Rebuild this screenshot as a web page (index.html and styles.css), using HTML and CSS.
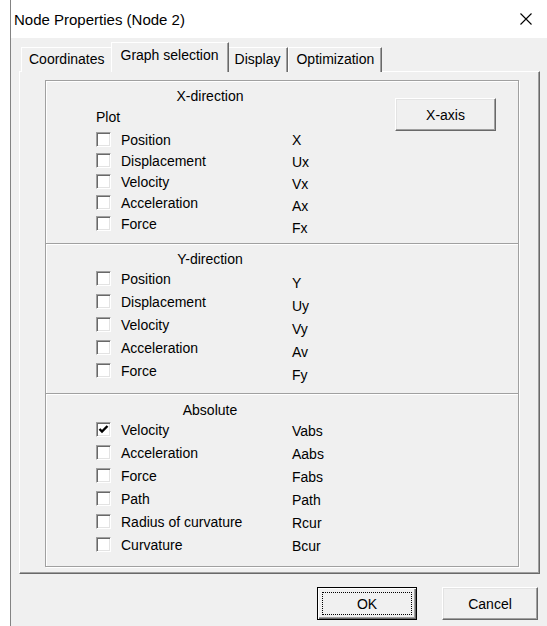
FILE: index.html
```html
<!DOCTYPE html>
<html>
<head>
    <meta charset="utf-8">
    <title>Node Properties (Node 2)</title>
    <link rel="stylesheet" href="styles.css">
</head>
<body>
    <div class="window">
        <div class="titlebar">
            <span class="title">Node Properties (Node 2)</span>
            <svg class="close" width="12" height="12" viewBox="0 0 12 12"><path d="M0.5 0.5 L11.5 11.5 M11.5 0.5 L0.5 11.5" stroke="#000" stroke-width="1.1" fill="none"/></svg>
        </div>
        <div class="client">
            <div class="tabs">
                <div class="tab">Coordinates</div>
                <div class="tab active">Graph selection</div>
                <div class="tab">Display</div>
                <div class="tab">Optimization</div>
            </div>
            <div class="panel">
                <div class="group">
                    <!-- X-direction -->
                    <div class="section sec-x">
                        <div class="sec-left">
                            <div class="sec-title">X-direction</div>
                            <div class="sec-body">
                                <div class="checks">
                                    <div class="plot">Plot</div>
                                    <div class="rows rows-x">
                                        <div class="row"><span class="chk"></span>Position</div>
                                        <div class="row"><span class="chk"></span>Displacement</div>
                                        <div class="row"><span class="chk"></span>Velocity</div>
                                        <div class="row"><span class="chk"></span>Acceleration</div>
                                        <div class="row"><span class="chk"></span>Force</div>
                                    </div>
                                </div>
                                <div class="syms syms-x">
                                    <div>X</div>
                                    <div>Ux</div>
                                    <div>Vx</div>
                                    <div>Ax</div>
                                    <div>Fx</div>
                                </div>
                            </div>
                        </div>
                        <button class="btn btn-axis">X-axis</button>
                    </div>
                    <!-- Y-direction -->
                    <div class="section sec-y">
                        <div class="sec-left">
                            <div class="sec-title">Y-direction</div>
                            <div class="sec-body">
                                <div class="checks">
                                    <div class="rows">
                                        <div class="row"><span class="chk"></span>Position</div>
                                        <div class="row"><span class="chk"></span>Displacement</div>
                                        <div class="row"><span class="chk"></span>Velocity</div>
                                        <div class="row"><span class="chk"></span>Acceleration</div>
                                        <div class="row"><span class="chk"></span>Force</div>
                                    </div>
                                </div>
                                <div class="syms syms-y">
                                    <div>Y</div>
                                    <div>Uy</div>
                                    <div>Vy</div>
                                    <div>Av</div>
                                    <div>Fy</div>
                                </div>
                            </div>
                        </div>
                    </div>
                    <!-- Absolute -->
                    <div class="section sec-abs">
                        <div class="sec-left">
                            <div class="sec-title">Absolute</div>
                            <div class="sec-body">
                                <div class="checks">
                                    <div class="rows">
                                        <div class="row"><span class="chk"><svg width="13" height="13" viewBox="0 0 13 13"><path d="M2.5 6 L5 8.5 L10.5 3" stroke="#000" stroke-width="2.4" fill="none"/></svg></span>Velocity</div>
                                        <div class="row"><span class="chk"></span>Acceleration</div>
                                        <div class="row"><span class="chk"></span>Force</div>
                                        <div class="row"><span class="chk"></span>Path</div>
                                        <div class="row"><span class="chk"></span>Radius of curvature</div>
                                        <div class="row"><span class="chk"></span>Curvature</div>
                                    </div>
                                </div>
                                <div class="syms syms-abs">
                                    <div>Vabs</div>
                                    <div>Aabs</div>
                                    <div>Fabs</div>
                                    <div>Path</div>
                                    <div>Rcur</div>
                                    <div>Bcur</div>
                                </div>
                            </div>
                        </div>
                    </div>
                </div>
            </div>
            <div class="buttons">
                <button class="btn btn-ok"><span class="focus">OK</span></button>
                <button class="btn btn-cancel">Cancel</button>
            </div>
        </div>
    </div>
</body>
</html>
```

FILE: styles.css
```css
body {
    margin: 0;
    background-color: #fff;
    font: 14px "Liberation Sans", Arial, sans-serif;
    color: #000;
}
.window {
    margin-left: 10px;
    border-left: 1px solid #838383;
    height: 626px;
    background-color: #f0f0f0;
}
.titlebar {
    height: 38px;
    background-color: #fff;
    display: flex;
    align-items: center;
    padding: 0 15px 0 3px;
}
.title {
    flex: 1;
    font-size: 15px;
}
.client {
    padding: 4px 7px 0 8px;
}

/* tabs */
.tabs {
    display: flex;
    align-items: flex-end;
    height: 30px;
    padding-left: 2px;
    margin-bottom: -1px;
}
.tab {
    box-sizing: border-box;
    height: 25px;
    line-height: 22px;
    padding: 0 7px;
    border-top: 1px solid #fff;
    border-left: 1px solid #fff;
    border-right: 1px solid #696969;
    box-shadow: inset -1px 0 0 #a0a0a0;
    background-color: #f0f0f0;
}
.tab.active {
    position: relative;
    z-index: 1;
    height: 30px;
    padding: 1px 9px 0 9px;
    margin: 0 -2px;
}
.panel {
    border-top: 1px solid #fff;
    border-left: 1px solid #fff;
    border-right: 1px solid #696969;
    border-bottom: 1px solid #696969;
    box-shadow: inset -1px -1px 0 #a0a0a0;
    padding: 8px 20px 6px 25px;
}

/* group box */
.group {
    border: 1px solid #a0a0a0;
    box-shadow: inset 1px 1px 0 #fff, 1px 1px 0 #fff;
}
.section {
    display: flex;
    box-sizing: border-box;
}
.sec-x {
    height: 163px;
    padding-top: 7px;
    border-bottom: 1px solid #a0a0a0;
    box-shadow: 0 1px 0 #fff;
}
.sec-y {
    height: 150px;
    padding-top: 7px;
    border-bottom: 1px solid #a0a0a0;
    box-shadow: 0 1px 0 #fff;
}
.sec-abs {
    height: 172px;
    padding-top: 8px;
}
.sec-left {
    width: 328px;
}
.sec-title {
    text-align: center;
    line-height: 16px;
}
.sec-body {
    display: flex;
}
.checks {
    width: 196px;
    margin-left: 50px;
}
.plot {
    margin-top: 5px;
    line-height: 16px;
}
.rows-x {
    margin-top: 4px;
}
.row {
    display: flex;
    align-items: center;
    height: 23px;
    white-space: nowrap;
}
.rows-x .row {
    height: 21px;
}
.chk {
    box-sizing: border-box;
    width: 15px;
    height: 15px;
    margin-right: 10px;
    border: 1px solid;
    border-color: #a0a0a0 #fff #fff #a0a0a0;
    box-shadow: inset 1px 1px 0 #696969, inset -1px -1px 0 #e3e3e3;
    background-color: #fff;
    flex: none;
}
.chk svg {
    display: block;
}
.syms div {
    line-height: 23px;
    height: 23px;
}
.syms-x {
    padding-top: 25px;
}
.syms-x div {
    line-height: 22px;
    height: 22px;
}
.syms-y {
    padding-top: 5px;
}
.syms-abs {
    padding-top: 2px;
}

/* buttons */
.btn {
    box-sizing: border-box;
    height: 33px;
    padding: 0;
    font: 14px "Liberation Sans", Arial, sans-serif;
    color: #000;
    background-color: #f0f0f0;
    border: 1px solid;
    border-color: #fff #696969 #696969 #fff;
    box-shadow: inset -1px -1px 0 #a0a0a0, inset 1px 1px 0 #e3e3e3;
}
.btn-axis {
    width: 101px;
    margin: 10px 0 0 21px;
}
.buttons {
    display: flex;
    justify-content: flex-end;
    gap: 25px;
    margin-top: 13px;
    padding-right: 2px;
}
.btn-ok {
    width: 100px;
    display: flex;
    border-color: #000;
    box-shadow: inset 1px 1px 0 #fff, inset -1px -1px 0 #696969, inset -2px -2px 0 #a0a0a0;
}
.btn-ok .focus {
    flex: 1;
    display: flex;
    align-items: center;
    justify-content: center;
    margin: 4px;
    border: 1px dotted #000;
}
.btn-cancel {
    width: 96px;
}
```
